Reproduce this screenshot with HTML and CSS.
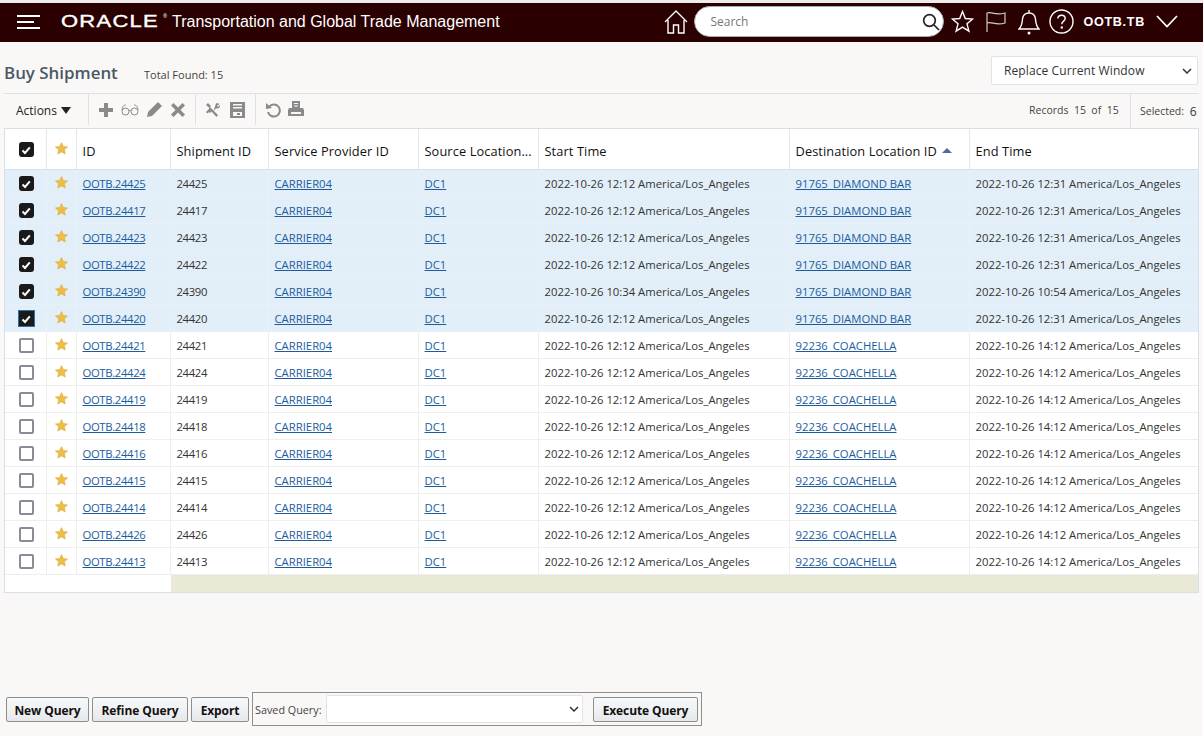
FILE: index.html
```html
<!DOCTYPE html>
<html lang="en">
<head>
<meta charset="utf-8">
<title>Buy Shipment</title>
<link rel="stylesheet" href="styles.css">
</head>
<body>
<svg class="defs" width="0" height="0"><defs>
<path id="star" d="M6.500 0.500L8.300 4.400L12.600 4.900L9.400 7.800L10.300 12.100L6.500 9.900L2.700 12.100L3.600 7.800L0.400 4.900L4.700 4.400Z"/>
<path id="tick" d="M3.500 7.500L6 10L10.800 4.300"/>
</defs></svg>
<header class="topbar">
  <svg class="burger" width="24" height="14" viewBox="0 0 24 14"><path d="M0 1H23M0 7H17M0 13H23"/></svg>
  <span class="oracle">ORACLE</span><span class="reg">®</span>
  <span class="product">Transportation and Global Trade Management</span>
  <div class="top-right">
    <svg class="ti home" width="24" height="26" viewBox="0 0 24 26"><path d="M1 13L12 2L23 13M4 11V24H9.500V16H14.500V24H20V11"/></svg>
    <div class="search"><span>Search</span>
      <svg class="mag" width="18" height="18" viewBox="0 0 18 18"><circle cx="7.500" cy="7.500" r="5.800"/><path d="M12 12L17 17"/></svg>
    </div>
    <svg class="ti star-o" width="23" height="23" viewBox="0 0 23 23"><path d="M11.500 1.500L14.300 8.500L21.700 9L16 13.800L17.900 21.200L11.500 17.100L5.100 21.200L7 13.800L1.300 9L8.700 8.500Z"/></svg>
    <svg class="ti flag" width="20" height="22" viewBox="0 0 20 22"><path d="M1 21V2C6 0 8 5 19 2V12C9 15 6 10 1 12"/></svg>
    <svg class="ti bell" width="22" height="26" viewBox="0 0 22 26"><path d="M1 20H21C18 17 18 15 17.500 10C17 6 14 4 11 4C8 4 5 6 4.500 10C4 15 4 17 1 20ZM11 1V4"/><circle class="dot" cx="11" cy="24" r="1.500"/></svg>
    <svg class="ti help" width="25" height="25" viewBox="0 0 25 25"><circle cx="12.500" cy="12.500" r="11.500"/><path d="M8.800 9.500C9 7.300 10.500 6.300 12.500 6.300C14.800 6.300 16.200 7.700 16.200 9.500C16.200 12 12.800 12.300 12.800 15.200"/><circle class="dot" cx="12.800" cy="18.500" r="1.200"/></svg>
    <span class="user">OOTB.TB</span>
    <svg class="ti chev" width="22" height="13" viewBox="0 0 22 13"><path d="M1 1L11 11.500L21 1"/></svg>
  </div>
</header>

<main class="page">
  <div class="title-row">
    <h1>Buy Shipment</h1>
    <span class="found">Total Found: 15</span>
    <div class="win-select"><span>Replace Current Window</span>
      <svg class="caret" width="10" height="6" viewBox="0 0 10 6"><path d="M1 1L5 5L9 1"/></svg>
    </div>
  </div>

  <div class="toolbar">
    <div class="tb-group actions">Actions <i class="tri"></i></div>
    <div class="tb-group g1">
      <svg width="16" height="16" viewBox="0 0 16 16"><path class="fill" d="M6 1H10V6H15V10H10V15H6V10H1V6H6Z"/></svg>
      <svg width="18" height="14" viewBox="0 0 18 14"><g class="line"><circle cx="4.500" cy="8.500" r="3.500"/><circle cx="13.500" cy="8.500" r="3.500"/><path d="M8 8C8.500 7.300 9.500 7.300 10 8M1 7C1.500 3 3 2 5 2M17 7C16.500 3 15 2 13 2"/></g></svg>
      <svg width="17" height="17" viewBox="0 0 17 17"><path class="fill" d="M12 1L16 5L6 15L1 16L2 11ZM2 11"/></svg>
      <svg width="16" height="16" viewBox="0 0 16 16"><path class="fill" d="M3.500 1L8 5.500L12.500 1L15 3.500L10.500 8L15 12.500L12.500 15L8 10.500L3.500 15L1 12.500L5.500 8L1 3.500Z"/></svg>
    </div>
    <div class="tb-group g2">
      <svg width="16" height="16" viewBox="0 0 16 16"><path class="fill" d="M1 3L3 1L6 4L5 5L8 8L13 13L11.500 15L6.500 9.500L5 11L4 10L2.500 11.500L1 10L3.500 7.500L4.500 6ZM9.500 6L11 1.500C12.500 0.800 14 1.500 14.500 2L12 4L13 5L15 3C15.500 5 14 7 11 6.500L8.500 9Z"/></svg>
      <svg width="15" height="16" viewBox="0 0 15 16"><path class="fill" fill-rule="evenodd" d="M0 0H15V16H0ZM3 2V3.500H12V2ZM3 5V6.500H12V5ZM3 10V14H12V10ZM7 11H10V13H7Z"/></svg>
    </div>
    <div class="tb-group g3">
      <svg width="16" height="16" viewBox="0 0 16 16"><path class="line bold" d="M4 5A6 6 0 1 1 3 10"/><path class="fill" d="M1 1L7 6L1 7Z"/></svg>
      <svg width="16" height="17" viewBox="0 0 16 17"><path class="fill" fill-rule="evenodd" d="M4 0H12V7H15L16 9V15H0V9L1 7H4ZM6 2V3H10V2ZM6 4.500V5.500H10V4.500ZM3 11V13H13V11Z"/></svg>
    </div>
    <div class="records">Records&nbsp; 15&nbsp; of&nbsp; 15</div>
    <div class="selected">Selected: <b>6</b></div>
  </div>

  <div class="grid-wrap">
  <table class="grid">
    <colgroup><col class="c1"><col class="c2"><col class="c3"><col class="c4"><col class="c5"><col class="c6"><col class="c7"><col class="c8"><col class="c9"></colgroup>
    <thead><tr>
      <th class="ck"><span class="box on big"><svg class="tk" width="14" height="14" viewBox="0 0 14 14"><use href="#tick"/></svg></span></th>
      <th class="st"><svg class="fav" width="13" height="13" viewBox="0 0 13 13"><use href="#star"/></svg></th>
      <th>ID</th><th>Shipment ID</th><th>Service Provider ID</th><th>Source Location...</th><th>Start Time</th>
      <th>Destination Location ID <i class="sort"></i></th><th>End Time</th>
    </tr></thead>
    <tbody>
      <tr class="sel"><td class="ck"><span class="box on"><svg class="tk" width="14" height="14" viewBox="0 0 14 14"><use href="#tick"/></svg></span></td><td class="st"><svg class="fav" width="13" height="13" viewBox="0 0 13 13"><use href="#star"/></svg></td><td><a href="#">OOTB.24425</a></td><td>24425</td><td><a href="#">CARRIER04</a></td><td><a href="#">DC1</a></td><td>2022-10-26 12:12 America/Los_Angeles</td><td><a href="#">91765_DIAMOND BAR</a></td><td>2022-10-26 12:31 America/Los_Angeles</td></tr>
      <tr class="sel"><td class="ck"><span class="box on"><svg class="tk" width="14" height="14" viewBox="0 0 14 14"><use href="#tick"/></svg></span></td><td class="st"><svg class="fav" width="13" height="13" viewBox="0 0 13 13"><use href="#star"/></svg></td><td><a href="#">OOTB.24417</a></td><td>24417</td><td><a href="#">CARRIER04</a></td><td><a href="#">DC1</a></td><td>2022-10-26 12:12 America/Los_Angeles</td><td><a href="#">91765_DIAMOND BAR</a></td><td>2022-10-26 12:31 America/Los_Angeles</td></tr>
      <tr class="sel"><td class="ck"><span class="box on"><svg class="tk" width="14" height="14" viewBox="0 0 14 14"><use href="#tick"/></svg></span></td><td class="st"><svg class="fav" width="13" height="13" viewBox="0 0 13 13"><use href="#star"/></svg></td><td><a href="#">OOTB.24423</a></td><td>24423</td><td><a href="#">CARRIER04</a></td><td><a href="#">DC1</a></td><td>2022-10-26 12:12 America/Los_Angeles</td><td><a href="#">91765_DIAMOND BAR</a></td><td>2022-10-26 12:31 America/Los_Angeles</td></tr>
      <tr class="sel"><td class="ck"><span class="box on"><svg class="tk" width="14" height="14" viewBox="0 0 14 14"><use href="#tick"/></svg></span></td><td class="st"><svg class="fav" width="13" height="13" viewBox="0 0 13 13"><use href="#star"/></svg></td><td><a href="#">OOTB.24422</a></td><td>24422</td><td><a href="#">CARRIER04</a></td><td><a href="#">DC1</a></td><td>2022-10-26 12:12 America/Los_Angeles</td><td><a href="#">91765_DIAMOND BAR</a></td><td>2022-10-26 12:31 America/Los_Angeles</td></tr>
      <tr class="sel"><td class="ck"><span class="box on"><svg class="tk" width="14" height="14" viewBox="0 0 14 14"><use href="#tick"/></svg></span></td><td class="st"><svg class="fav" width="13" height="13" viewBox="0 0 13 13"><use href="#star"/></svg></td><td><a href="#">OOTB.24390</a></td><td>24390</td><td><a href="#">CARRIER04</a></td><td><a href="#">DC1</a></td><td>2022-10-26 10:34 America/Los_Angeles</td><td><a href="#">91765_DIAMOND BAR</a></td><td>2022-10-26 10:54 America/Los_Angeles</td></tr>
      <tr class="sel"><td class="ck"><span class="box on focus"><svg class="tk" width="14" height="14" viewBox="0 0 14 14"><use href="#tick"/></svg></span></td><td class="st"><svg class="fav" width="13" height="13" viewBox="0 0 13 13"><use href="#star"/></svg></td><td><a href="#">OOTB.24420</a></td><td>24420</td><td><a href="#">CARRIER04</a></td><td><a href="#">DC1</a></td><td>2022-10-26 12:12 America/Los_Angeles</td><td><a href="#">91765_DIAMOND BAR</a></td><td>2022-10-26 12:31 America/Los_Angeles</td></tr>
      <tr><td class="ck"><span class="box"></span></td><td class="st"><svg class="fav" width="13" height="13" viewBox="0 0 13 13"><use href="#star"/></svg></td><td><a href="#">OOTB.24421</a></td><td>24421</td><td><a href="#">CARRIER04</a></td><td><a href="#">DC1</a></td><td>2022-10-26 12:12 America/Los_Angeles</td><td><a href="#">92236_COACHELLA</a></td><td>2022-10-26 14:12 America/Los_Angeles</td></tr>
      <tr><td class="ck"><span class="box"></span></td><td class="st"><svg class="fav" width="13" height="13" viewBox="0 0 13 13"><use href="#star"/></svg></td><td><a href="#">OOTB.24424</a></td><td>24424</td><td><a href="#">CARRIER04</a></td><td><a href="#">DC1</a></td><td>2022-10-26 12:12 America/Los_Angeles</td><td><a href="#">92236_COACHELLA</a></td><td>2022-10-26 14:12 America/Los_Angeles</td></tr>
      <tr><td class="ck"><span class="box"></span></td><td class="st"><svg class="fav" width="13" height="13" viewBox="0 0 13 13"><use href="#star"/></svg></td><td><a href="#">OOTB.24419</a></td><td>24419</td><td><a href="#">CARRIER04</a></td><td><a href="#">DC1</a></td><td>2022-10-26 12:12 America/Los_Angeles</td><td><a href="#">92236_COACHELLA</a></td><td>2022-10-26 14:12 America/Los_Angeles</td></tr>
      <tr><td class="ck"><span class="box"></span></td><td class="st"><svg class="fav" width="13" height="13" viewBox="0 0 13 13"><use href="#star"/></svg></td><td><a href="#">OOTB.24418</a></td><td>24418</td><td><a href="#">CARRIER04</a></td><td><a href="#">DC1</a></td><td>2022-10-26 12:12 America/Los_Angeles</td><td><a href="#">92236_COACHELLA</a></td><td>2022-10-26 14:12 America/Los_Angeles</td></tr>
      <tr><td class="ck"><span class="box"></span></td><td class="st"><svg class="fav" width="13" height="13" viewBox="0 0 13 13"><use href="#star"/></svg></td><td><a href="#">OOTB.24416</a></td><td>24416</td><td><a href="#">CARRIER04</a></td><td><a href="#">DC1</a></td><td>2022-10-26 12:12 America/Los_Angeles</td><td><a href="#">92236_COACHELLA</a></td><td>2022-10-26 14:12 America/Los_Angeles</td></tr>
      <tr><td class="ck"><span class="box"></span></td><td class="st"><svg class="fav" width="13" height="13" viewBox="0 0 13 13"><use href="#star"/></svg></td><td><a href="#">OOTB.24415</a></td><td>24415</td><td><a href="#">CARRIER04</a></td><td><a href="#">DC1</a></td><td>2022-10-26 12:12 America/Los_Angeles</td><td><a href="#">92236_COACHELLA</a></td><td>2022-10-26 14:12 America/Los_Angeles</td></tr>
      <tr><td class="ck"><span class="box"></span></td><td class="st"><svg class="fav" width="13" height="13" viewBox="0 0 13 13"><use href="#star"/></svg></td><td><a href="#">OOTB.24414</a></td><td>24414</td><td><a href="#">CARRIER04</a></td><td><a href="#">DC1</a></td><td>2022-10-26 12:12 America/Los_Angeles</td><td><a href="#">92236_COACHELLA</a></td><td>2022-10-26 14:12 America/Los_Angeles</td></tr>
      <tr><td class="ck"><span class="box"></span></td><td class="st"><svg class="fav" width="13" height="13" viewBox="0 0 13 13"><use href="#star"/></svg></td><td><a href="#">OOTB.24426</a></td><td>24426</td><td><a href="#">CARRIER04</a></td><td><a href="#">DC1</a></td><td>2022-10-26 12:12 America/Los_Angeles</td><td><a href="#">92236_COACHELLA</a></td><td>2022-10-26 14:12 America/Los_Angeles</td></tr>
      <tr><td class="ck"><span class="box"></span></td><td class="st"><svg class="fav" width="13" height="13" viewBox="0 0 13 13"><use href="#star"/></svg></td><td><a href="#">OOTB.24413</a></td><td>24413</td><td><a href="#">CARRIER04</a></td><td><a href="#">DC1</a></td><td>2022-10-26 12:12 America/Los_Angeles</td><td><a href="#">92236_COACHELLA</a></td><td>2022-10-26 14:12 America/Los_Angeles</td></tr>
    </tbody>
  </table>
  <div class="grid-foot"><div class="foot-left"></div><div class="foot-fill"></div></div>
  </div>

  <div class="bottom">
    <button class="btn b-new">New Query</button>
    <button class="btn b-ref">Refine Query</button>
    <button class="btn b-exp">Export</button>
    <div class="saved">
      <label>Saved Query:</label>
      <div class="sq-select"><svg class="caret" width="10" height="6" viewBox="0 0 10 6"><path d="M1 1L5 5L9 1"/></svg></div>
      <button class="btn b-exe">Execute Query</button>
    </div>
  </div>
</main>
</body>
</html>
```
FILE: styles.css
```css
* { box-sizing: border-box; }
html, body { margin: 0; padding: 0; }
body {
  width: 1203px; height: 736px; overflow: hidden;
  background: #faf8f6; color: #333;
  font-family: "Open Sans", "Noto Sans", "Liberation Sans", sans-serif;
  font-size: 12px;
  display: flex; flex-direction: column;
  border-top: 3px solid #efedeb;
}
.defs { position: absolute; }

.topbar {
  height: 39px; flex: none; background: #2a0000; color: #fff;
  display: flex; align-items: center; padding: 0 0 2px 17px;
}
.burger { fill: none; stroke: #fff; stroke-width: 2; margin-right: 20px; }
.oracle {
  font-family: "Liberation Sans", sans-serif; font-size: 17px; line-height: 1;
  width: 102px; display: inline-block; letter-spacing: 1px; font-weight: 400;
  -webkit-text-stroke: .4px #fff; transform: scaleX(1.29); transform-origin: left;
}
.reg { font-size: 5px; align-self: flex-start; margin-top: 10px; margin-left: 0; width: 9px; }
.product { font-family: "Liberation Sans", sans-serif; font-size: 16px; }
.top-right { margin-left: auto; display: flex; align-items: center; }
.ti { fill: none; stroke: #fff; stroke-width: 1.400; flex: none; }
.ti .dot { fill: #fff; stroke: none; }
.home { margin-right: 6px; }
.search {
  width: 250px; height: 31px; background: #fff; border-radius: 16px; border: 1px solid #aaa;
  display: flex; align-items: center; justify-content: space-between; padding: 0 3px 0 15px;
  font-size: 12px; color: #777; margin-right: 7px;
}
.mag { fill: none; stroke: #222; stroke-width: 1.700; }
.star-o { margin-right: 12px; }
.flag { margin-right: 12px; stroke: #ccc; stroke-width: 1.200; }
.bell { margin-right: 9px; }
.help { margin-right: 9px; }
.user { font-family: "Liberation Sans", sans-serif; font-weight: 700; font-size: 12.600px; letter-spacing: .7px; margin-right: 11px; }
.chev { margin-right: 25px; stroke-width: 1.800; }

.page { flex: 1; display: flex; flex-direction: column; min-height: 0; padding: 0 4px 0 4px; }
.title-row { height: 51px; flex: none; display: flex; align-items: center; padding-top: 11px; }
h1 { margin: 0; font-size: 16.900px; font-weight: 600; color: #4a5866; line-height: 1; width: 140px; }
.found { font-size: 11px; color: #444; padding-top: 2px; }
.win-select {
  margin-left: auto; width: 207px; height: 29px; background: #fff; border: 1px solid #e3e3e3; border-radius: 2px;
  display: flex; align-items: center; justify-content: space-between; padding: 0 5px 0 12px;
  font-size: 12px; color: #333; margin-top: -5px; margin-right: 1px; letter-spacing: .1px;
}
.caret { fill: none; stroke: #333; stroke-width: 1.500; flex: none; }

.toolbar {
  height: 35px; flex: none; display: flex; align-items: stretch;
  border-top: 1px solid #dde2e8; border-bottom: 0 none;
}
.tb-group { display: flex; align-items: center; border-right: 1px solid #dde2e8; margin-bottom: 3px; }
.actions { width: 85px; padding: 1px 0 0 12px; font-size: 12px; color: #222; gap: 4px; }
.tri { width: 0; height: 0; border-left: 5px solid transparent; border-right: 5px solid transparent; border-top: 7px solid #222; display: inline-block; margin-left: 0; }
.g1 { width: 107px; padding-left: 9px; gap: 7px; }
.g2 { width: 60px; padding-left: 9px; gap: 9px; }
.g3 { padding-left: 9px; gap: 7px; border-right: 0; }
.fill { fill: #8a8a8a; }
.line { fill: none; stroke: #8a8a8a; stroke-width: 1; }
.bold { stroke-width: 2; }
.records { margin-left: auto; width: 101px; font-size: 10.500px; color: #444; display: flex; align-items: center; margin-bottom: 3px; white-space: pre; }
.selected { width: 69px; border-left: 1px solid #dde2e8; display: flex; align-items: center; padding-left: 9px; font-size: 10.500px; color: #444; gap: 3px; margin-bottom: 0; white-space: pre; }
.selected b { font-weight: 400; font-size: 12px; color: #2a3a4a; }

.grid-wrap { width: 1195px; background: #fff; border: 1px solid #d7dfe8; border-top-width: 1px; flex: none; }
.grid { border-collapse: collapse; table-layout: fixed; width: 1193px; font-size: 11.300px; }
.c1 { width: 41px; } .c2 { width: 30px; } .c3 { width: 94px; } .c4 { width: 98px; } .c5 { width: 150px; }
.c6 { width: 120px; } .c7 { width: 251px; } .c8 { width: 180px; } .c9 { width: 229px; }
th {
  height: 40px; text-align: left; font-weight: 400; font-size: 12.800px; color: #111; padding: 4px 5px 0 6px;
  border-right: 1px solid #e4e8ee; border-bottom: 1px solid #d7dfe8; white-space: nowrap; letter-spacing: .1px;
}
th:last-child, td:last-child { border-right: 0; }
td {
  height: 27px; padding: 2px 5px 0 6px; border-right: 1px solid #eeeeee; border-bottom: 1px solid #eeeeee;
  white-space: nowrap; color: #333;
}
td:nth-child(3), td:nth-child(4) { letter-spacing: -.35px; }
.sel td { background: #e3eff8; border-color: #e3eff8; border-bottom-color: #e8f1f9; border-right-color: #e8f1f9; }
a { color: #1c5c9e; text-decoration: underline; }
th.ck, th.st, td.ck, td.st { padding: 0; text-align: center; line-height: 0; }
th.ck, td.ck { padding: 2px 0 0 2px; }
.box {
  display: inline-block; width: 15px; height: 15px; border: 2px solid #8c8a96; border-radius: 2px; background: #fff; vertical-align: middle;
}
.box.on { background: #1a1a1a; border: 0; border-radius: 3px; }
.box.on svg { display: block; margin: .5px; }
.box.focus { outline: 1px solid #2a6fb0; outline-offset: 0; border-radius: 0; }
.tk { fill: none; stroke: #fff; stroke-width: 2; }
.fav { fill: #eebd45; stroke: #d9a52f; stroke-width: .5; vertical-align: middle; margin-top: -1px; }
th .fav { margin-top: 0; }
.sort { display: inline-block; width: 0; height: 0; border-left: 5px solid transparent; border-right: 5px solid transparent; border-bottom: 5px solid #4a6d9c; margin: 0 0 3px 2px; }

.grid-foot { display: flex; height: 17px; }
.foot-left { width: 166px; }
.foot-fill { flex: 1; background: #eae9d7; }

.bottom { margin-top: auto; display: flex; align-items: center; gap: 3px; padding: 0 0 10px 2px; }
.btn {
  font-family: "Open Sans", "Noto Sans", sans-serif; font-weight: 700; font-size: 12px; color: #111; height: 25px; padding: 3px 0 0;
  background: linear-gradient(#f7f8f9, #e6e9ec); border: 1px solid #8e8e8e; border-radius: 2px; letter-spacing: -.1px;
}
.b-new { width: 83px; } .b-ref { width: 96px; } .b-exp { width: 58px; } .b-exe { width: 105px; margin-left: 10px; }
.saved {
  width: 450px; height: 34px; border: 1px solid #8e8e8e; display: flex; align-items: center; padding-left: 2px; margin-left: 0;
}
.saved label { font-size: 10.800px; color: #444; width: 71px; flex: none; padding-top: 1px; }
.sq-select {
  width: 257px; height: 28px; background: #fff; border: 1px solid #e3e3e3; border-radius: 2px; flex: none;
  display: flex; align-items: center; justify-content: flex-end; padding-right: 3px;
}
```
